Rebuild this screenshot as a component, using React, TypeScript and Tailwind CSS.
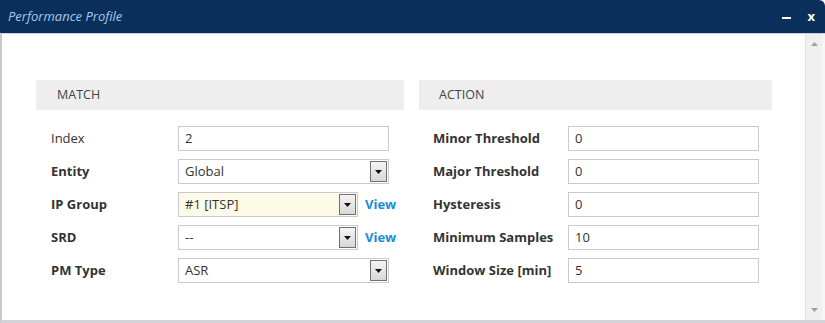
const font = { fontFamily: '"Open Sans", "Noto Sans", sans-serif' };

function TextBox({ value, w = 'w-[211px]' }: { value: string; w?: string }) {
  return (
    <div className={`${w} h-[25px] border border-[#c9c9cf] bg-white flex items-center pl-[6px] text-[13px] text-[#333]`}>
      {value}
    </div>
  );
}

function SelectBox({ value, w = 'w-[211px]', bg = 'bg-white' }: { value: string; w?: string; bg?: string }) {
  return (
    <div className={`${w} h-[25px] border border-[#c9c9cf] ${bg} flex items-center justify-between pl-[6px] pr-[1px] text-[13px] text-[#333]`}>
      <span>{value}</span>
      <div className="w-[17px] h-[21px] border border-[#707070] bg-gradient-to-b from-[#f4f4f4] to-[#d8d8d8] flex items-center justify-center">
        <svg width="7" height="4" viewBox="0 0 7 4">
          <path d="M0 0h7L3.5 4z" fill="#111" />
        </svg>
      </div>
    </div>
  );
}

function Row({ label, bold = true, children, labelW }: { label: string; bold?: boolean; children: React.ReactNode; labelW: string }) {
  return (
    <div className="flex items-center h-[25px]">
      <div className={`${labelW} text-[13px] text-[#333] ${bold ? 'font-bold' : ''}`}>{label}</div>
      {children}
    </div>
  );
}

function View() {
  return <span className="ml-[7px] text-[13px] font-bold text-[#168ed6]">View</span>;
}

export default function App() {
  return (
    <div className="w-[825px] h-[323px] bg-white overflow-hidden flex flex-col" style={font}>
      <div className="h-[34px] bg-[#0b2f5b] rounded-tr-[6px] flex items-center justify-between pl-[8px] pr-[10px] border-b border-[#c5d3e3]">
        <span className="italic text-[13px] text-[#a6c8f0]">Performance Profile</span>
        <div className="flex items-center gap-[16px] text-white font-bold">
          <span className="block w-[9px] h-[2px] bg-white mt-[3px]" />
          <span className="text-[13px] leading-none">x</span>
        </div>
      </div>
      <div className="flex flex-1 border-l-[2px] border-[#c8c8cc] border-b-[3px] border-b-[#d3d3d8]">
        <div className="flex-1 flex pt-[46px] pl-[34px] gap-[15px]">
          <div className="w-[368px]">
            <div className="h-[30px] bg-[#eeeeee] flex items-center pl-[21px] text-[12.5px] text-[#444]">MATCH</div>
            <div className="flex flex-col gap-[8px] mt-[16px] pl-[15px]">
              <Row label="Index" bold={false} labelW="w-[127px]"><TextBox value="2" /></Row>
              <Row label="Entity" labelW="w-[127px]"><SelectBox value="Global" /></Row>
              <Row label="IP Group" labelW="w-[127px]"><SelectBox value="#1 [ITSP]" w="w-[180px]" bg="bg-[#fdfbe8]" /><View /></Row>
              <Row label="SRD" labelW="w-[127px]"><SelectBox value="--" w="w-[180px]" /><View /></Row>
              <Row label="PM Type" labelW="w-[127px]"><SelectBox value="ASR" /></Row>
            </div>
          </div>
          <div className="w-[353px]">
            <div className="h-[30px] bg-[#eeeeee] flex items-center pl-[20px] text-[12.5px] text-[#444]">ACTION</div>
            <div className="flex flex-col gap-[8px] mt-[16px] pl-[14px]">
              <Row label="Minor Threshold" labelW="w-[135px]"><TextBox value="0" w="w-[191px]" /></Row>
              <Row label="Major Threshold" labelW="w-[135px]"><TextBox value="0" w="w-[191px]" /></Row>
              <Row label="Hysteresis" labelW="w-[135px]"><TextBox value="0" w="w-[191px]" /></Row>
              <Row label="Minimum Samples" labelW="w-[135px]"><TextBox value="10" w="w-[191px]" /></Row>
              <Row label="Window Size [min]" labelW="w-[135px]"><TextBox value="5" w="w-[191px]" /></Row>
            </div>
          </div>
        </div>
        <div className="w-[17px] bg-[#f0f0f0] border-l border-[#e2e2e2] flex flex-col items-center justify-between py-[8px]">
          <svg width="7" height="4" viewBox="0 0 7 4"><path d="M3.5 0L7 4H0z" fill="#a0a0a0" /></svg>
          <svg width="7" height="4" viewBox="0 0 7 4"><path d="M0 0h7L3.5 4z" fill="#a0a0a0" /></svg>
        </div>
        <div className="w-[3px] bg-[#f6f6f6]" />
      </div>
    </div>
  );
}
